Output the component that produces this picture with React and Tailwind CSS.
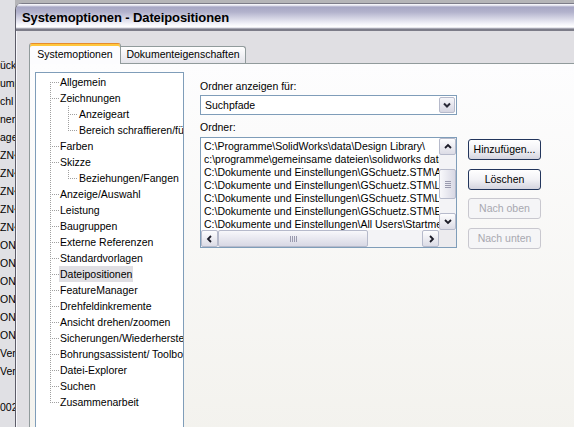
import React from 'react'

const fragments = [
  'ückl', 'ump', 'chl', 'nen', 'age', 'ZN<', 'ZN<', 'ZN<', 'ZN<', 'ZN<',
  'ON<', 'ON<', 'ON<', 'ON<', 'ON<', 'ON<', 'Ver', 'Ver', '', '002',
]

const treeItems = [
  { label: 'Allgemein', level: 1 },
  { label: 'Zeichnungen', level: 1 },
  { label: 'Anzeigeart', level: 2 },
  { label: 'Bereich schraffieren/füllen', level: 2 },
  { label: 'Farben', level: 1 },
  { label: 'Skizze', level: 1 },
  { label: 'Beziehungen/Fangen', level: 2 },
  { label: 'Anzeige/Auswahl', level: 1 },
  { label: 'Leistung', level: 1 },
  { label: 'Baugruppen', level: 1 },
  { label: 'Externe Referenzen', level: 1 },
  { label: 'Standardvorlagen', level: 1 },
  { label: 'Dateipositionen', level: 1, selected: true },
  { label: 'FeatureManager', level: 1 },
  { label: 'Drehfeldinkremente', level: 1 },
  { label: 'Ansicht drehen/zoomen', level: 1 },
  { label: 'Sicherungen/Wiederherstellen', level: 1 },
  { label: 'Bohrungsassistent/ Toolbox', level: 1 },
  { label: 'Datei-Explorer', level: 1 },
  { label: 'Suchen', level: 1 },
  { label: 'Zusammenarbeit', level: 1 },
]

const folders = [
  'C:\\Programme\\SolidWorks\\data\\Design Library\\',
  'c:\\programme\\gemeinsame dateien\\solidworks data\\',
  'C:\\Dokumente und Einstellungen\\GSchuetz.STM\\Anwendungsdaten',
  'C:\\Dokumente und Einstellungen\\GSchuetz.STM\\Lokale Einstellungen',
  'C:\\Dokumente und Einstellungen\\GSchuetz.STM\\Lokale Einstellungen',
  'C:\\Dokumente und Einstellungen\\GSchuetz.STM\\Eigene Dateien',
  'C:\\Dokumente und Einstellungen\\All Users\\Startmenü\\Programme',
]

const arrows = {
  up: '1,5 4,2 7,5',
  down: '1,2 4,5 7,2',
  left: '5,1 2,4 5,7',
  right: '3,1 6,4 3,7',
}

const ScrollButton = ({ dir }) => (
  <div className="w-[17px] h-[17px] shrink-0 rounded-[2px] border border-[#b6bacb] bg-gradient-to-b from-[#fdfdfe] to-[#dcdce6] flex items-center justify-center">
    <svg width="8" height="8" viewBox="0 0 8 8">
      <polyline points={arrows[dir]} fill="none" stroke="#1c1c28" strokeWidth="1.8" />
    </svg>
  </div>
)

const TreeLines = () => {
  // dotted connectors, coordinates relative to the tree's inner box
  const rowCenter = (i) => 9 + i * 16
  const l1Rows = treeItems.map((t, i) => (t.level === 1 ? i : null)).filter(i => i !== null)
  return (
    <svg className="absolute left-0 top-0 pointer-events-none" width="150" height="420" shapeRendering="crispEdges">
      <line x1="14.5" y1={rowCenter(0)} x2="14.5" y2={rowCenter(20) + 1} stroke="#a0a0a0" strokeDasharray="1 1" />
      {l1Rows.map(i => (
        <line key={i} x1="16" y1={rowCenter(i) + 0.5} x2="23" y2={rowCenter(i) + 0.5} stroke="#a0a0a0" strokeDasharray="1 1" />
      ))}
      <line x1="32.5" y1="33" x2="32.5" y2={rowCenter(3) + 1} stroke="#a0a0a0" strokeDasharray="1 1" />
      <line x1="32.5" y1="97" x2="32.5" y2={rowCenter(6) + 1} stroke="#a0a0a0" strokeDasharray="1 1" />
      {[2, 3, 6].map(i => (
        <line key={i} x1="34" y1={rowCenter(i) + 0.5} x2="41" y2={rowCenter(i) + 0.5} stroke="#a0a0a0" strokeDasharray="1 1" />
      ))}
    </svg>
  )
}

const XpButton = ({ children, disabled }) => (
  <div
    className={
      disabled
        ? 'h-[21px] w-[73px] leading-[13px] rounded-[3px] border border-[#c9c8cf] bg-[#f5f5f7] text-[#a8a8b0] flex items-center justify-center'
        : 'h-[21px] w-[73px] leading-[13px] rounded-[3px] border border-[#22355c] bg-gradient-to-b from-[#ffffff] via-[#f2f2f6] to-[#d4d4de] flex items-center justify-center'
    }
  >
    {children}
  </div>
)

export default function App() {
  return (
    <div className="w-[574px] h-[427px] overflow-hidden flex bg-[#b5b5b8] text-black text-[10.5px] font-['Liberation_Sans',Arial,sans-serif]">
      {/* window behind the dialog */}
      <div className="w-[15px] shrink-0 bg-[#e0e0e4] pt-[56px] overflow-hidden">
        {fragments.map((f, i) => (
          <div key={i} className="h-[18px] leading-[18px] whitespace-nowrap">{f}</div>
        ))}
      </div>

      <div className="flex-1 min-w-0 pt-[3px]">
        <div className="w-[600px] h-full flex flex-col rounded-tl-[7px] border-l border-[#5c5c68] overflow-hidden bg-[#e0dfe3]">
          {/* Title bar */}
          <div className="h-[28px] shrink-0 pl-[6px] pt-[2px] flex items-center bg-[linear-gradient(180deg,#7c7c88_0px,#7c7c88_1px,#f4f4fa_1px,#f4f4fa_2px,#a6a6c4_4px,#b2b2cc_9px,#f4f4fa_21px,#ffffff_24px,#d0d0dc_25px,#7c7c88_26px,#7c7c88_28px)]">
            <span className="text-[13px] font-bold tracking-[-0.1px]">Systemoptionen - Dateipositionen</span>
          </div>

          {/* Body */}
          <div className="flex-1 flex flex-col pl-[13px] shadow-[inset_1px_0_0_#f8f8fc]">
            {/* Tabs */}
            <div className="flex items-end pt-[12px]">
              <div className="relative z-10 w-[92px] h-[21px] rounded-t-[3px] border-l border-r border-t border-[#919b9c] border-t-[#e68b2c] shadow-[inset_0_2px_0_#ffc73c] bg-[#fcfcfe] flex items-center justify-center pt-[1px]">
                Systemoptionen
              </div>
              <div className="w-[125px] h-[17px] mb-[1px] rounded-tr-[3px] border-t border-r border-[#919b9c] bg-gradient-to-b from-[#ffffff] to-[#e4e4ea] flex items-center justify-center">
                Dokumenteigenschaften
              </div>
            </div>

            {/* Tab panel */}
            <div className="flex-1 -mt-px border border-[#919b9c] bg-gradient-to-b from-[#fdfdfe] to-[#f2f1ec] pl-[5px] pt-[8px] flex items-start">
              {/* Tree */}
              <div className="relative w-[149px] h-[400px] shrink-0 border border-[#7f9db9] bg-white overflow-hidden pt-[1px]">
                <TreeLines />
                {treeItems.map(item => (
                  <div
                    key={item.label}
                    className={
                      item.level === 1
                        ? 'h-[16px] flex items-center pl-[23px] whitespace-nowrap'
                        : 'h-[16px] flex items-center pl-[42px] whitespace-nowrap'
                    }
                  >
                    <span className={item.selected ? 'px-[1px] h-[16px] leading-[16px] bg-[#e0dfe3]' : 'px-[1px] h-[16px] leading-[16px]'}>
                      {item.label}
                    </span>
                  </div>
                ))}
              </div>

              {/* Right side */}
              <div className="ml-[16px] flex flex-col">
                <div className="mt-[8px] h-[13px] leading-[13px]">Ordner anzeigen für:</div>
                <div className="mt-[2px] w-[257px] h-[20px] border border-[#7f9db9] bg-white flex items-center p-[1px]">
                  <span className="flex-1 pl-[3px] leading-[16px]">Suchpfade</span>
                  <div className="w-[16px] h-[16px] rounded-[2px] border border-[#b6bacb] bg-gradient-to-b from-[#f6f6fa] to-[#d6d6e2] flex items-center justify-center">
                    <svg width="8" height="8" viewBox="0 0 8 8">
                      <polyline points="1,2.5 4,5.5 7,2.5" fill="none" stroke="#2a2a38" strokeWidth="2" />
                    </svg>
                  </div>
                </div>
                <div className="mt-[6px] h-[13px] leading-[13px]">Ordner:</div>

                <div className="mt-[3px] flex items-start">
                  {/* List */}
                  <div className="w-[257px] h-[111px] border border-[#7f9db9] bg-white flex flex-col">
                    <div className="h-[92px] flex">
                      <div className="flex-1 min-w-0 overflow-hidden pt-[2px] pl-[3px]">
                        {folders.map((f, i) => (
                          <div key={i} className="h-[13px] leading-[13px] whitespace-nowrap">{f}</div>
                        ))}
                      </div>
                      <div className="w-[17px] flex flex-col bg-[#f3f3f6]">
                        <ScrollButton dir="up" />
                        <div className="h-[14px]" />
                        <div className="h-[30px] rounded-[2px] border border-[#b6bacb] bg-gradient-to-r from-[#f8f8fb] to-[#d8d8e4] flex flex-col items-center justify-center gap-[1px]">
                          {[0, 1, 2, 3].map(i => (
                            <div key={i} className="w-[6px] h-[1px] bg-[#9a9aae]" />
                          ))}
                        </div>
                        <div className="flex-1" />
                        <ScrollButton dir="down" />
                      </div>
                    </div>
                    <div className="h-[17px] flex bg-[#f3f3f6]">
                      <ScrollButton dir="left" />
                      <div className="w-[150px] h-[17px] rounded-[2px] border border-[#b6bacb] bg-gradient-to-b from-[#f8f8fb] to-[#d8d8e4] flex items-center justify-center gap-[1px]">
                        {[0, 1, 2, 3].map(i => (
                          <div key={i} className="w-[1px] h-[6px] bg-[#9a9aae]" />
                        ))}
                      </div>
                      <div className="flex-1" />
                      <ScrollButton dir="right" />
                      <div className="w-[17px] h-[17px] bg-[#ecebee]" />
                    </div>
                  </div>

                  {/* Buttons */}
                  <div className="ml-[11px] pt-[2px] flex flex-col gap-[8.5px]">
                    <XpButton>Hinzufügen...</XpButton>
                    <XpButton>Löschen</XpButton>
                    <XpButton disabled>Nach oben</XpButton>
                    <XpButton disabled>Nach unten</XpButton>
                  </div>
                </div>
              </div>
            </div>
          </div>
        </div>
      </div>
    </div>
  )
}
